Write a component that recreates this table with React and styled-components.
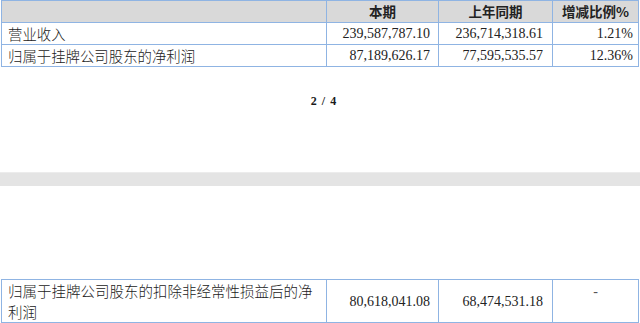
import React from "react";
import styled, { createGlobalStyle } from "styled-components";

const lineBlue = "#8fb4e3";

const topRows = [
  { label: "营业收入", current: "239,587,787.10", previous: "236,714,318.61", change: "1.21%" },
  { label: "归属于挂牌公司股东的净利润", current: "87,189,626.17", previous: "77,595,535.57", change: "12.36%" },
];

const GlobalStyle = createGlobalStyle`
  html, body {
    margin: 0;
    padding: 0;
    background: #ffffff;
  }
  body {
    font-family: "Liberation Serif", "Noto Sans CJK SC", serif;
    color: #1a1a1a;
  }
`;

const Page = styled.div`
  width: 640px;
  height: 323px;
  overflow: hidden;
  display: flex;
  flex-direction: column;
`;

const Table = styled.table`
  border-collapse: collapse;
  table-layout: fixed;
  width: 637px;
  margin-left: 1px;
  font-size: 14px;
`;

const Col = styled.col`
  width: ${props => props.w}px;
`;

const HeadCell = styled.th`
  background: #d9d9d9;
  border: 1px solid ${lineBlue};
  height: 21px;
  padding: 0;
  font-weight: bold;
  text-align: center;
  line-height: 21px;
  font-family: "Noto Sans CJK SC", sans-serif;
  font-size: 13.5px;
  color: #222;
`;

const LabelCell = styled.td`
  border: 1px solid ${lineBlue};
  height: ${props => props.tall ? 41 : 20}px;
  padding: 0 0 0 6px;
  line-height: 21px;
  font-family: "Noto Sans CJK SC", sans-serif;
  font-size: 14.4px;
  font-weight: 300;
  color: #222;
  vertical-align: middle;
  white-space: nowrap;
  overflow: hidden;
`;

const WrapLabel = styled(LabelCell)`
  white-space: normal;
  vertical-align: top;
  font-size: 14.5px;
  padding-right: 12px;
`;

const NumCell = styled.td`
  border: 1px solid ${lineBlue};
  padding: 0 ${props => props.pad || 8}px 0 0;
  text-align: right;
  line-height: 21px;
  vertical-align: middle;
  color: #222;
`;

const DashCell = styled.td`
  border: 1px solid ${lineBlue};
  padding: 1px 0 0;
  text-align: center;
  vertical-align: top;
  line-height: 21px;
  color: #555;
`;

const PageNumberArea = styled.div`
  height: 106px;
  display: flex;
  justify-content: center;
  padding-top: 27px;
  box-sizing: border-box;
`;

const PageNumber = styled.span`
  font-family: "Liberation Serif", serif;
  font-weight: bold;
  font-size: 12px;
  letter-spacing: 1px;
  margin-left: 8px;
  line-height: 14px;
`;

const GapBand = styled.div`
  height: 14px;
  background: #e4e4e4;
  border-top: 1px solid #ececec;
  box-sizing: border-box;
`;

const Spacer = styled.div`
  height: 95px;
`;

const Columns = () => (
  <colgroup>
    <Col w={325} />
    <Col w={112} />
    <Col w={114} />
    <Col w={86} />
  </colgroup>
);

export default function App() {
  return (
    <>
      <GlobalStyle />
      <Page>
        <Table>
          <Columns />
          <thead>
            <tr>
              <HeadCell />
              <HeadCell>本期</HeadCell>
              <HeadCell>上年同期</HeadCell>
              <HeadCell>增减比例%</HeadCell>
            </tr>
          </thead>
          <tbody>
            {topRows.map(row => (
              <tr key={row.label}>
                <LabelCell>{row.label}</LabelCell>
                <NumCell>{row.current}</NumCell>
                <NumCell pad={9}>{row.previous}</NumCell>
                <NumCell pad={5}>{row.change}</NumCell>
              </tr>
            ))}
          </tbody>
        </Table>
        <PageNumberArea>
          <PageNumber>2 / 4</PageNumber>
        </PageNumberArea>
        <GapBand />
        <Spacer />
        <Table>
          <Columns />
          <tbody>
            <tr>
              <WrapLabel tall>归属于挂牌公司股东的扣除非经常性损益后的净利润</WrapLabel>
              <NumCell>80,618,041.08</NumCell>
              <NumCell pad={9}>68,474,531.18</NumCell>
              <DashCell>-</DashCell>
            </tr>
          </tbody>
        </Table>
      </Page>
    </>
  );
}
